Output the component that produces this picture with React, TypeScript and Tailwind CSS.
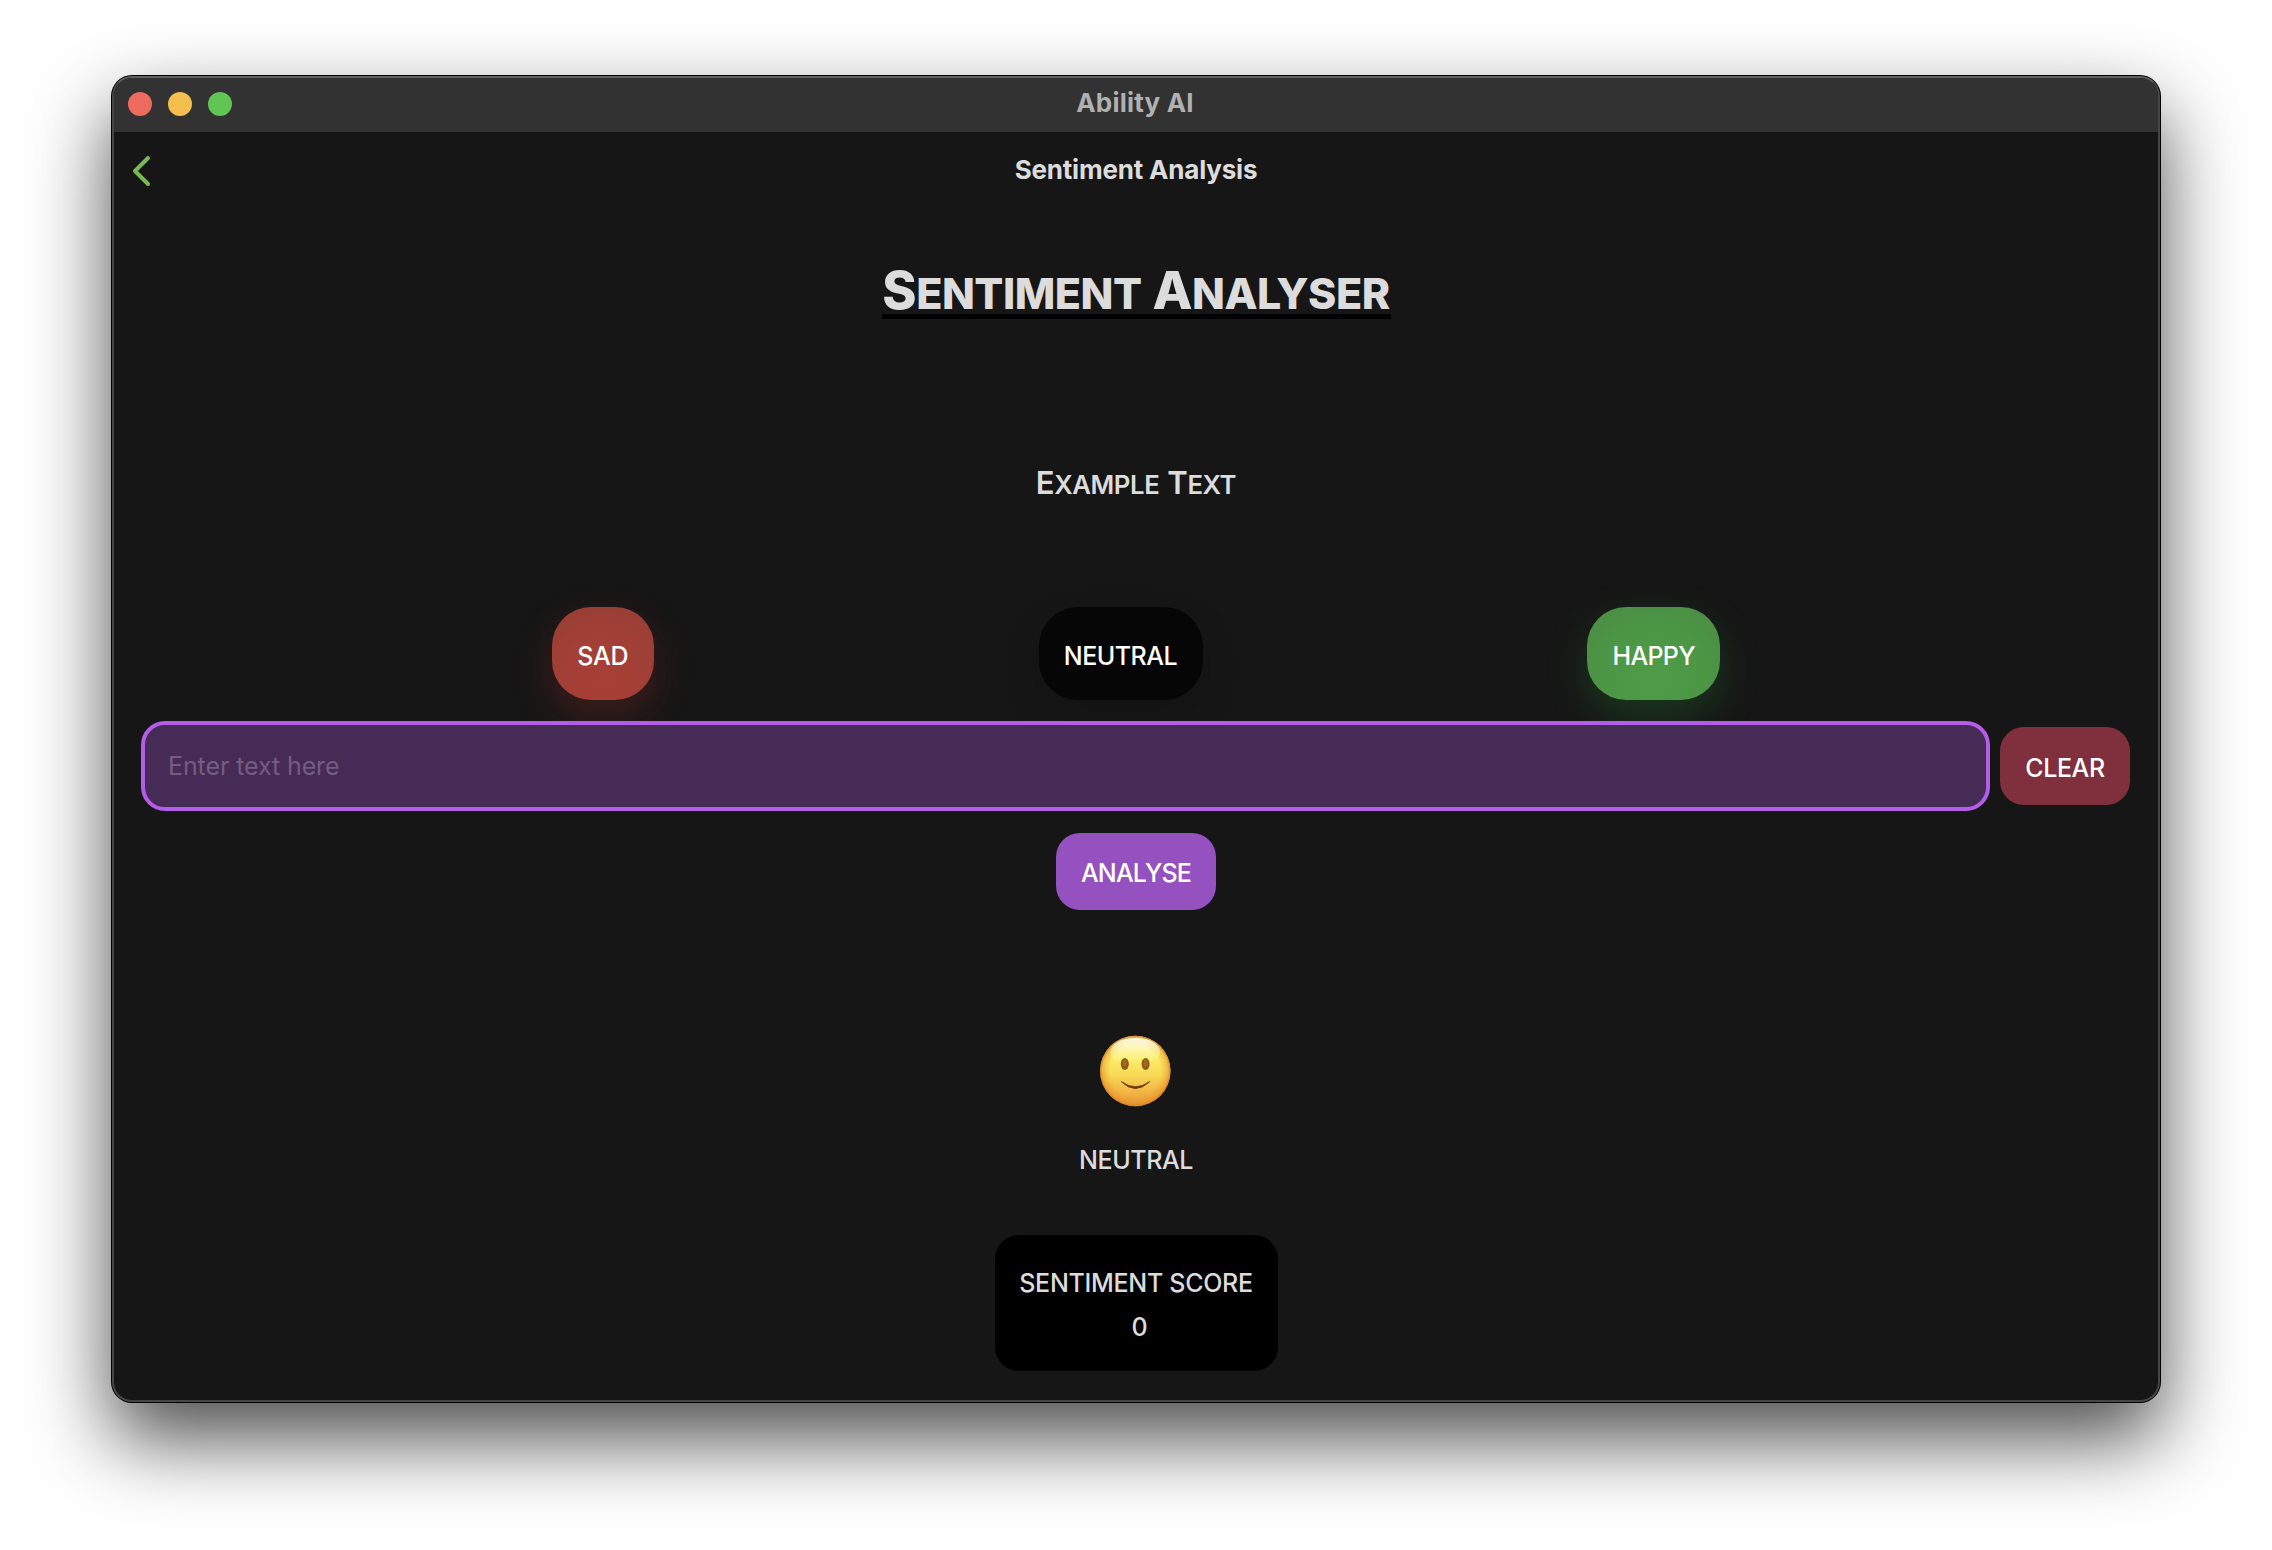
import React from "react";

function SmallCaps({ children, className }: { children: string; className: string }) {
  return <span className={`inline-block uppercase ${className}`}>{children}</span>;
}

function SlightSmile() {
  return (
    <svg width="72" height="72" viewBox="0 0 72 72" aria-label="slightly smiling face">
      <defs>
        <linearGradient id="face" x1="0" y1="0" x2="0" y2="1">
          <stop offset="0" stopColor="#fdf3a0" />
          <stop offset="0.3" stopColor="#fcee6a" />
          <stop offset="0.55" stopColor="#f8da56" />
          <stop offset="0.8" stopColor="#f3b543" />
          <stop offset="1" stopColor="#e39a38" />
        </linearGradient>
        <radialGradient id="rim" cx="0.5" cy="0.5" r="0.5">
          <stop offset="0.72" stopColor="#e8912a" stopOpacity="0" />
          <stop offset="0.92" stopColor="#e8912a" stopOpacity="0.5" />
          <stop offset="1" stopColor="#d97a1e" stopOpacity="0.9" />
        </radialGradient>
        <linearGradient id="gloss" x1="0" y1="0" x2="0" y2="1">
          <stop offset="0" stopColor="#fffef0" stopOpacity="0.95" />
          <stop offset="1" stopColor="#fff6a0" stopOpacity="0" />
        </linearGradient>
      </defs>
      <circle cx="35.300" cy="36" r="35.2" fill="url(#face)" />
      <circle cx="35.300" cy="36" r="35.2" fill="url(#rim)" />
      <ellipse cx="35.300" cy="17" rx="25" ry="14" fill="url(#gloss)" />
      <ellipse cx="24.800" cy="29" rx="4" ry="6" fill="#8f5a18" />
      <ellipse cx="45.600" cy="29" rx="4" ry="6" fill="#8f5a18" />
      <ellipse cx="24.800" cy="28" rx="2" ry="3.8" fill="#a5691d" />
      <ellipse cx="45.600" cy="28" rx="2" ry="3.8" fill="#a5691d" />
      <path d="M21.300 46.600 Q35.300 57 49.700 46.600 Q35.300 60.500 21.300 46.600 Z" fill="#6b3a0e" stroke="#6b3a0e" strokeWidth="0.9" strokeLinejoin="round" />
    </svg>
  );
}

export default function App() {
  return (
    <div className="h-[1550px] w-[2272px] overflow-hidden bg-white pl-[111px] pt-[75px] font-['Inter',sans-serif] text-[25px] leading-[30px] text-[#dcdcdc]">
      <div className="h-[1328px] w-[2050px] rounded-[21px] bg-black p-px shadow-[0_36px_80px_rgba(0,0,0,0.7)]">
        <div className="flex h-full flex-col overflow-hidden rounded-[20px] border-2 border-[#464646] border-t-[#606060] bg-[#161616]">
          <header className="-mt-px flex h-[55px] shrink-0 items-center bg-[#323232]">
            <div className="-mt-px flex w-[300px] gap-4 pl-[14px]">
              <span className="size-6 rounded-full bg-[#ed6a5e]" />
              <span className="size-6 rounded-full bg-[#f5bf4f]" />
              <span className="size-6 rounded-full bg-[#61c554]" />
            </div>
            <div className="-mt-[3px] flex-1 text-center text-[26px] font-bold tracking-[0.2px] text-[#b0b0b0]">
              Ability AI
            </div>
            <div className="w-[302px]" />
          </header>

          <nav className="flex h-[76px] shrink-0 items-center">
            <div className="w-[100px] pl-[17px] pt-px">
              <svg width="22" height="32" viewBox="0 0 22 32" fill="none" stroke="#7ab856" strokeWidth="4" strokeLinecap="round" strokeLinejoin="round">
                <path d="M17 3 L4 16 L17 29" />
              </svg>
            </div>
            <div className="flex-1 text-center text-[26px] font-bold tracking-[-0.2px]">Sentiment Analysis</div>
            <div className="w-[100px]" />
          </nav>

          <main className="flex flex-1 flex-col items-center">
            <h1 className="mt-[53px] flex h-[58px] w-[509px] items-baseline justify-center gap-[11px] border-b-[5px] border-black text-[43px] font-extrabold leading-[60px] tracking-[-0.5px]">
              <SmallCaps className="first-letter:text-[52px]">Sentiment</SmallCaps>
              <SmallCaps className="first-letter:text-[52px]">Analyser</SmallCaps>
            </h1>
            <h2 className="mt-[142px] flex h-[44px] items-baseline gap-[8px] text-[25.7px] font-semibold leading-[44px] tracking-[-0.4px]">
              <SmallCaps className="first-letter:text-[31px]">Example</SmallCaps>
              <SmallCaps className="first-letter:text-[31px]">Text</SmallCaps>
            </h2>

            <div className="mt-[102px] flex h-[93px] w-full justify-evenly px-[53px] font-medium text-white">
              <button className="w-[102px] rounded-[39px] bg-[radial-gradient(circle_at_50%_75%,#a74037_0%,#a33f36_45%,#953e34_100%)] pt-[4px] tracking-[-0.3px] shadow-[0_16px_40px_rgba(190,50,40,0.25)]">SAD</button>
              <button className="w-[164px] rounded-[39px] bg-[#060606] pt-[4px] tracking-[-0.5px] shadow-[0_16px_40px_rgba(0,0,0,0.15)]">NEUTRAL</button>
              <button className="w-[133px] rounded-[39px] bg-[radial-gradient(circle_at_50%_75%,#4d9b47_0%,#4c9746_50%,#4a8a43_100%)] pt-[4px] tracking-[-0.7px] shadow-[0_16px_40px_rgba(45,160,55,0.25)]">HAPPY</button>
            </div>

            <div className="mt-[21px] flex w-full items-center gap-[10px] px-[27px]">
              <input
                placeholder="Enter text here"
                className="h-[90px] w-[1849px] rounded-[24px] border-4 border-[#b35de8] bg-[#452b55] pl-[23px] tracking-[-0.1px] outline-none placeholder:text-[#745d82] placeholder:opacity-100"
              />
              <button className="h-[78px] w-[130px] rounded-[24px] bg-[#80303d] pt-[3px] font-medium tracking-[-0.4px] text-white">CLEAR</button>
            </div>

            <button className="mt-[22px] h-[77px] w-[160px] rounded-[24px] bg-[#9451bf] pt-[3px] font-medium tracking-[-0.8px] text-white">ANALYSE</button>

            <div className="mt-[125px] h-[72px]">
              <SlightSmile />
            </div>
            <p className="mt-[38px] font-medium tracking-[-0.4px]">NEUTRAL</p>

            <section className="mt-[60px] h-[136px] w-[283px] rounded-[24px] bg-black pt-[26px] text-center font-medium leading-[44px]">
              <div className="tracking-[-0.3px]">SENTIMENT SCORE</div>
              <div className="pl-[7px]">0</div>
            </section>
          </main>
        </div>
      </div>
    </div>
  );
}
